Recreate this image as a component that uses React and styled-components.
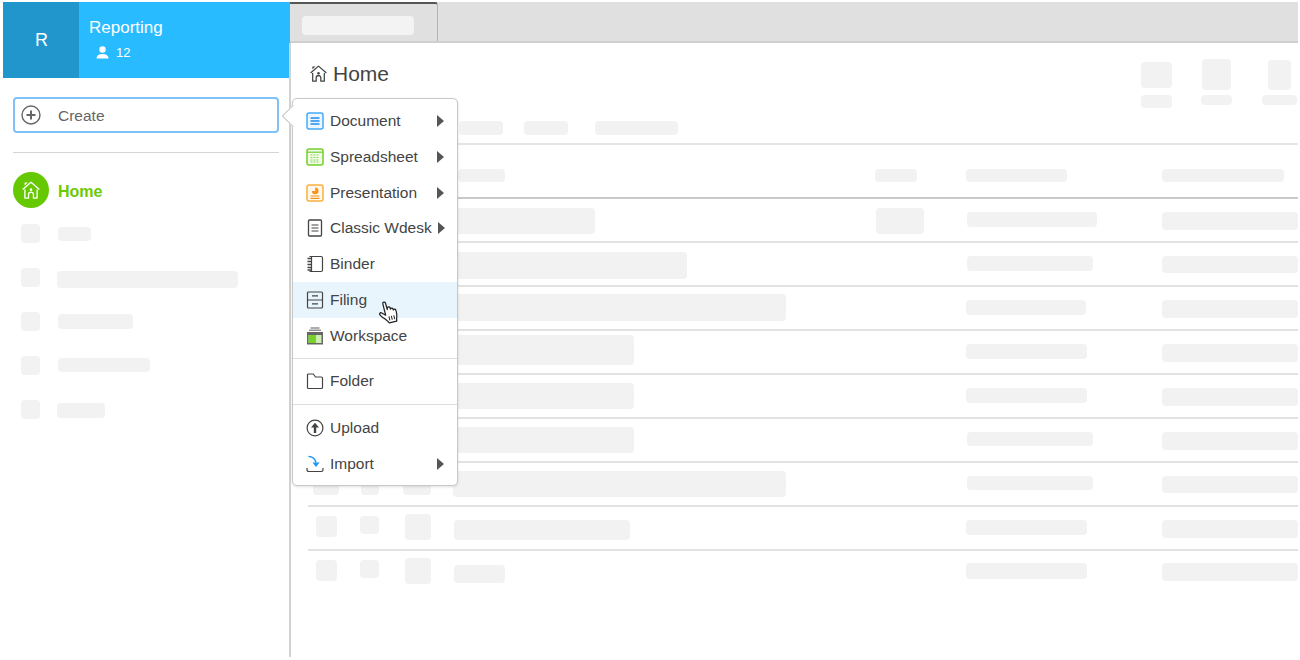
import React from "react";
import styled, { createGlobalStyle } from "styled-components";

const GlobalStyle = createGlobalStyle`
  html, body {
    margin: 0;
    background: #fff;
    font-family: "Liberation Sans", Arial, sans-serif;
    color: #444;
  }
`;

const HomeGlyph = ({ size = 18, color = "#444" }) => (
  <svg width={size} height={size} viewBox="0 0 18 18" fill="none" stroke={color} strokeWidth="1.2" strokeLinejoin="round">
    <path d="M1.5 8.6 9 2l7.500 6.600" />
    <path d="M3.500 8.500v7.800h3.300v-3.200a2.200 2.200 0 0 1 4.400 0v3.200h3.300V8.500" />
    <circle cx="9" cy="8.700" r="1.200" fill={color} stroke="none" />
    <path d="M3.200 2.300h3l-3 2.700z" fill={color} stroke="none" />
  </svg>
);

const DocumentIcon = () => (
  <svg width="18" height="18" viewBox="0 0 18 18" fill="none">
    <rect x="1" y="1" width="16" height="16" rx="2" stroke="#45aaf8" strokeWidth="1.500" fill="#eef7ff" />
    <path d="M4.500 6h9M4.500 9h9M4.500 12h9" stroke="#1f8fec" strokeWidth="1.300" />
  </svg>
);

const SheetIcon = () => (
  <svg width="18" height="18" viewBox="0 0 18 18" fill="none">
    <rect x="1" y="1" width="16" height="16" rx="2" stroke="#72d02a" strokeWidth="1.500" fill="#f2fbe8" />
    <path d="M1 4.200h16" stroke="#72d02a" strokeWidth="1.200" />
    <path d="M4.500 7h9M4.500 9.500h9M4.500 12h9M4.500 14h9" stroke="#8fd65a" strokeWidth="1.100" strokeDasharray="2 1" />
  </svg>
);

const SlideIcon = () => (
  <svg width="18" height="18" viewBox="0 0 18 18" fill="none">
    <rect x="1" y="1" width="16" height="16" rx="2" stroke="#fbb040" strokeWidth="1.500" fill="#fff8ec" />
    <path d="M9.200 3.600a3.300 3.300 0 1 1-3.300 3.300h3.300z" fill="#f7941d" />
    <path d="M4.500 12h9M4.500 14.300h9" stroke="#f7941d" strokeWidth="1.200" />
  </svg>
);

const ClassicIcon = () => (
  <svg width="18" height="18" viewBox="0 0 18 18" fill="none" stroke="#444">
    <rect x="2.500" y="1" width="13" height="16" rx="1" strokeWidth="1.300" />
    <path d="M5.500 6h7M5.500 9h7M5.500 12h7" strokeWidth="1.200" />
  </svg>
);

const BinderIcon = () => (
  <svg width="18" height="18" viewBox="0 0 18 18" fill="none" stroke="#444" strokeWidth="1.200">
    <path d="M3.500 1.500h11.500a1.500 1.500 0 0 1 1.500 1.500v12a1.500 1.500 0 0 1-1.500 1.500H3.500" />
    <path d="M5.500 1.500v15" />
    <path d="M1.500 3.500h3.500M1.500 6.500h3.500M1.500 9.500h3.500M1.500 12.500h3.500M1.500 15h3.500" strokeWidth="1.500" />
  </svg>
);

const FilingIcon = () => (
  <svg width="18" height="18" viewBox="0 0 18 18" fill="none" stroke="#444" strokeWidth="1.200">
    <rect x="1.500" y="1" width="15" height="16" rx="1" />
    <path d="M1.500 9h15M6 4.800h6M6 12.800h6" />
  </svg>
);

const WorkspaceIcon = () => (
  <svg width="18" height="18" viewBox="0 0 18 18" fill="none">
    <path d="M4.500 1h9" stroke="#777" strokeWidth="1.200" />
    <path d="M3 3.200h12" stroke="#777" strokeWidth="1.200" />
    <rect x="1" y="5" width="16" height="12.500" fill="#666" />
    <rect x="2.500" y="8" width="13" height="8" fill="#cfeeb0" />
    <rect x="2.500" y="8" width="7.500" height="8" fill="#76d12b" />
  </svg>
);

const FolderIcon = () => (
  <svg width="18" height="18" viewBox="0 0 18 18" fill="none" stroke="#444" strokeWidth="1.200" strokeLinejoin="round">
    <path d="M1.500 3a1 1 0 0 1 1-1h4.800l2.200 3h6a1 1 0 0 1 1 1v9.500a1 1 0 0 1-1 1h-13a1 1 0 0 1-1-1z" />
  </svg>
);

const UploadIcon = () => (
  <svg width="18" height="18" viewBox="0 0 18 18" fill="none">
    <circle cx="9" cy="9" r="7.900" stroke="#444" strokeWidth="1.200" />
    <path d="M9 3.800 13 8.500h-2.800V14H7.800V8.500H5z" fill="#444" />
  </svg>
);

const ImportIcon = () => (
  <svg width="18" height="18" viewBox="0 0 18 18" fill="none">
    <path d="M2.500 1.500c3.500 0 6.500 2 7.500 6" stroke="#1e96f3" strokeWidth="1.600" />
    <path d="M6.500 7.500h7L10 12z" fill="#1e96f3" />
    <path d="M1 13v1.800a1.700 1.700 0 0 0 1.700 1.700h12.600a1.700 1.700 0 0 0 1.700-1.700V13" stroke="#444" strokeWidth="1.200" />
  </svg>
);

const HandCursor = () => (
  <svg width="21" height="25" viewBox="0 0 18 22" fill="none">
    <g transform="rotate(-14 9 11)">
      <path
        d="M6 2.200c0-1.400 2.300-1.400 2.400 0l.2 6 .4-1.400c.4-1 2.200-.9 2.300.3l.1 1.500c.4-1 2-.8 2.200.3l.1 1c.5-.8 2-.6 2.100.6.100 2 0 4.200-.6 5.800-.5 1.300-1 2.500-1 3.800H7.500c-.4-1.600-1.800-3-3-4.600C3.300 14.800 1.800 12.600 1.200 11.300c-.6-1.300.8-2.300 1.900-1.300L6 12.700z"
        fill="#fff"
        stroke="#222"
        strokeWidth="1.100"
        strokeLinejoin="round"
      />
      <path d="M8.500 14.500v3.500M10.700 14.500v3.500M12.900 14.500v3.500" stroke="#222" strokeWidth="0.900" />
    </g>
  </svg>
);

const menuGroups = [
  [
    { label: "Document", icon: <DocumentIcon />, more: true },
    { label: "Spreadsheet", icon: <SheetIcon />, more: true },
    { label: "Presentation", icon: <SlideIcon />, more: true },
    { label: "Classic Wdesk", icon: <ClassicIcon />, more: true },
    { label: "Binder", icon: <BinderIcon /> },
    { label: "Filing", icon: <FilingIcon />, active: true },
    { label: "Workspace", icon: <WorkspaceIcon /> },
  ],
  [{ label: "Folder", icon: <FolderIcon /> }],
  [
    { label: "Upload", icon: <UploadIcon /> },
    { label: "Import", icon: <ImportIcon />, more: true },
  ],
];

const sideRows = [
  { w: 33, h: 14, top: 3, left: 0 },
  { w: 181, h: 17, top: 3, left: -1 },
  { w: 75, h: 15, top: 2, left: 0 },
  { w: 92, h: 14, top: 2, left: 0 },
  { w: 48, h: 15, top: 3, left: -1 },
];

// each bar is [left nudge, width, top inside the row, height]
const tableRows = [
  { name: [0, 141, 9, 26], extra: [1, 48, 9, 26], date: [1, 130, 13, 15], owner: [0, 136, 13, 18] },
  { name: [0, 233, 9, 27], date: [1, 126, 13, 15], owner: [0, 136, 13, 17] },
  { name: [0, 332, 7, 27], date: [0, 120, 13, 15], owner: [0, 136, 13, 18] },
  { name: [0, 180, 4, 30], date: [0, 121, 13, 15], owner: [0, 136, 13, 18] },
  { name: [0, 180, 8, 26], date: [0, 121, 13, 15], owner: [0, 136, 13, 18] },
  { name: [0, 180, 8, 26], date: [1, 126, 13, 14], owner: [0, 136, 13, 18] },
  {
    lead: [[-3, 26, 8, 24], [1, 18, 8, 24], [-2, 28, 8, 24]],
    name: [-1, 333, 8, 26],
    date: [1, 126, 13, 14],
    owner: [0, 136, 13, 17],
  },
  { name: [0, 176, 13, 20], date: [0, 121, 13, 15], owner: [0, 136, 13, 18] },
  { name: [0, 51, 14, 18], date: [0, 121, 12, 16], owner: [0, 136, 12, 18], last: true },
];

const defaultLead = [[0, 21, 9, 21], [0, 19, 9, 18], [0, 26, 7, 26]];

const TableBar = ({ bar }) => (bar ? <Bar $left={bar[0]} $w={bar[1]} $top={bar[2]} $h={bar[3]} /> : <span />);

const App = () => {
  return (
    <>
      <GlobalStyle />
      <Shell>
        <SideBar>
          <Team>
            <TeamLetter>R</TeamLetter>
            <TeamInfo>
              <TeamName>Reporting</TeamName>
              <Members>
                <svg width="13" height="13" viewBox="0 0 13 13" fill="#fff">
                  <circle cx="6.500" cy="3.500" r="3.200" />
                  <path d="M.5 12.500c0-3 2-4.500 6-4.500s6 1.500 6 4.500z" />
                </svg>
                12
              </Members>
            </TeamInfo>
          </Team>
          <SideBody>
            <CreateWrap>
              <CreateButton>
                <svg width="20" height="20" viewBox="0 0 20 20" fill="none" stroke="#666">
                  <circle cx="10" cy="10" r="9" strokeWidth="1.400" />
                  <path d="M10 5.500v9M5.500 10h9" strokeWidth="2" />
                </svg>
                <CreateLabel>Create</CreateLabel>
              </CreateButton>
              <Menu>
                {menuGroups.map((group, i) => (
                  <MenuGroup key={i} $first={i === 0} $gap={i === 2 ? 5 : 4}>
                    {group.map((item) => (
                      <MenuItem key={item.label} $active={item.active}>
                        {item.icon}
                        {item.label}
                        {item.more && <Caret />}
                      </MenuItem>
                    ))}
                  </MenuGroup>
                ))}
                <Pointer>
                  <HandCursor />
                </Pointer>
              </Menu>
            </CreateWrap>
            <SideLine />
            <HomeLink>
              <HomeBadge>
                <HomeGlyph size={20} color="#fff" />
              </HomeBadge>
              <HomeLabel>Home</HomeLabel>
            </HomeLink>
            <SideList>
              {sideRows.map((row, i) => (
                <SideRow key={i}>
                  <Bar $w={19} $h={19} />
                  <Bar $w={row.w} $h={row.h} $top={row.top} $left={row.left} />
                </SideRow>
              ))}
            </SideList>
          </SideBody>
        </SideBar>
        <Main>
          <TabBar>
            <Tab>
              <Bar $w={112} $h={19} $light />
            </Tab>
          </TabBar>
          <Content>
            <PageHead>
              <PageTitle>
                <HomeGlyph size={19} />
                Home
              </PageTitle>
              <Tools>
                <Tool>
                  <Bar $w={31} $h={26} $top={3} />
                  <Bar $w={31} $h={13} $top={7} />
                </Tool>
                <Tool $left={29}>
                  <Bar $w={29} $h={31} />
                  <Bar $w={31} $h={10} $top={5} />
                </Tool>
                <Tool $left={30}>
                  <Bar $w={23} $h={30} $top={1} />
                  <Bar $w={35} $h={10} $top={5} />
                </Tool>
              </Tools>
            </PageHead>
            <FilterRow>
              <Bar $w={44} $h={14} />
              <Bar $w={44} $h={14} $left={21} />
              <Bar $w={83} $h={14} $left={27} />
            </FilterRow>
            <HeadRow>
              <span />
              <span />
              <span />
              <Bar $left={4} $w={47} $h={13} $top={24} />
              <Bar $w={42} $h={13} $top={24} />
              <Bar $w={101} $h={13} $top={24} />
              <Bar $w={122} $h={13} $top={24} />
            </HeadRow>
            {tableRows.map((row, i) => (
              <TableRow key={i} $last={row.last}>
                {(row.lead || defaultLead).map((bar, n) => (
                  <TableBar key={n} bar={bar} />
                ))}
                <TableBar bar={row.name} />
                <TableBar bar={row.extra} />
                <TableBar bar={row.date} />
                <TableBar bar={row.owner} />
              </TableRow>
            ))}
          </Content>
        </Main>
      </Shell>
    </>
  );
};

const Shell = styled.div`
  display: flex;
  box-sizing: border-box;
  height: 657px;
  padding: 2px 2px 0 3px;
`;

const SideBar = styled.aside`
  width: 287px;
  flex-shrink: 0;
  display: flex;
  flex-direction: column;
`;

const Team = styled.div`
  display: flex;
  height: 76px;
  background: #29bbff;
  color: #fff;
`;

const TeamLetter = styled.div`
  width: 76px;
  display: flex;
  align-items: center;
  justify-content: center;
  padding-left: 1px;
  box-sizing: border-box;
  background: #2096cc;
  font-size: 18px;
`;

const TeamInfo = styled.div`
  padding: 16px 0 0 10px;
`;

const TeamName = styled.div`
  font-size: 17px;
  line-height: 20px;
`;

const Members = styled.div`
  display: flex;
  align-items: center;
  gap: 7px;
  margin: 7px 0 0 7px;
  font-size: 13px;
  line-height: 15px;
`;

const SideBody = styled.div`
  padding: 19px 11px 0 10px;
`;

const CreateWrap = styled.div`
  position: relative;
  z-index: 2;
`;

const CreateButton = styled.div`
  box-sizing: border-box;
  height: 36px;
  display: flex;
  align-items: center;
  gap: 17px;
  padding-left: 6px;
  border: 2px solid #80c2f8;
  border-radius: 4px;
  font-size: 15.5px;
  color: #666;
`;

const CreateLabel = styled.span`
  padding-top: 1px;
`;

const Menu = styled.div`
  position: absolute;
  left: calc(100% + 13px);
  top: 1px;
  box-sizing: border-box;
  width: 166px;
  height: 388px;
  padding: 4.25px 0 0;
  background: #fff;
  border: 1px solid #c8c8c8;
  border-radius: 5px;
  box-shadow: 0 1px 3px rgba(0, 0, 0, 0.12);

  &::before {
    content: "";
    position: absolute;
    left: -8px;
    top: 9px;
    width: 15px;
    height: 15px;
    background: #fff;
    border-left: 1px solid #c8c8c8;
    border-bottom: 1px solid #c8c8c8;
    transform: rotate(45deg);
  }
`;

const MenuGroup = styled.div`
  position: relative;
  ${(props) => !props.$first && `margin-top: ${props.$gap}px; padding-top: 5px; border-top: 1.5px solid #ddd;`}
`;

const MenuItem = styled.div`
  box-sizing: border-box;
  height: 35.75px;
  display: flex;
  align-items: center;
  gap: 6px;
  padding: 0 13px 0 13px;
  background: ${(props) => (props.$active ? "#e9f5fd" : "transparent")};
  font-size: 15.5px;
  color: #444;
  white-space: nowrap;

  svg {
    flex-shrink: 0;
  }
`;

const Caret = styled.i`
  width: 0;
  height: 0;
  margin-left: auto;
  border-left: 7px solid #555;
  border-top: 6px solid transparent;
  border-bottom: 6px solid transparent;
`;

const Pointer = styled.div`
  position: absolute;
  left: 85px;
  top: 201px;
  display: flex;
`;

const SideLine = styled.div`
  height: 1px;
  margin-top: 19px;
  background: #d4d4d4;
`;

const HomeLink = styled.div`
  display: flex;
  align-items: center;
  gap: 9px;
  margin-top: 19px;
  font-size: 16px;
  font-weight: 700;
  color: #6ccb00;
`;

const HomeLabel = styled.span`
  padding-top: 3px;
`;

const HomeBadge = styled.div`
  width: 36px;
  height: 36px;
  display: flex;
  align-items: center;
  justify-content: center;
  border-radius: 50%;
  background: #66c800;
`;

const SideList = styled.div`
  margin-top: 16px;
  padding-left: 8px;
`;

const SideRow = styled.div`
  height: 44px;
  display: flex;
  align-items: flex-start;
  gap: 18px;
`;

const Bar = styled.span`
  display: block;
  flex-shrink: 0;
  width: ${(props) => props.$w}px;
  height: ${(props) => props.$h}px;
  margin-top: ${(props) => props.$top || 0}px;
  margin-left: ${(props) => props.$left || 0}px;
  border-radius: 4px;
  background: ${(props) => (props.$light ? "#f3f3f3" : "#f2f2f2")};
`;

const Main = styled.main`
  flex: 1;
  min-width: 0;
  display: flex;
  flex-direction: column;
`;

const TabBar = styled.div`
  flex-shrink: 0;
  display: flex;
  height: 39px;
  background: #e0e0e0;
  border-bottom: 2px solid #cfcfcf;
`;

const Tab = styled.div`
  box-sizing: border-box;
  width: 148px;
  height: 39px;
  padding: 12px 0 0 12px;
  border-top: 2px solid #555;
  border-right: 1px solid #b5b5b5;
  border-top-right-radius: 3px;
`;

const Content = styled.div`
  flex: 1;
  margin-left: -1px;
  padding-left: 17px;
  border-left: 2px solid #d2d2d2;
`;

const PageHead = styled.div`
  height: 78px;
  display: flex;
  justify-content: space-between;
`;

const PageTitle = styled.h1`
  display: flex;
  align-items: center;
  gap: 5px;
  height: 25px;
  margin: 18px 0 0 1px;
  font-size: 21px;
  font-weight: 400;
  color: #444;
`;

const Tools = styled.div`
  display: flex;
  padding: 16px 1px 0 0;
`;

const Tool = styled.div`
  display: flex;
  flex-direction: column;
  align-items: center;
  margin-left: ${(props) => props.$left || 0}px;
`;

const FilterRow = styled.div`
  box-sizing: border-box;
  height: 24px;
  display: flex;
  padding-left: 151px;
  border-bottom: 2px solid #e4e4e4;
`;

const Columns = styled.div`
  box-sizing: border-box;
  display: grid;
  grid-template-columns: 44px 45px 49px 421px 91px 196px 136px;
  align-items: start;
  padding-left: 8px;
`;

const HeadRow = styled(Columns)`
  height: 54px;
  border-bottom: 2px solid #c9c9c9;
`;

const TableRow = styled(Columns)`
  height: 44px;
  border-bottom: ${(props) => (props.$last ? "none" : "2px solid #e2e2e2")};
`;

export default App;
